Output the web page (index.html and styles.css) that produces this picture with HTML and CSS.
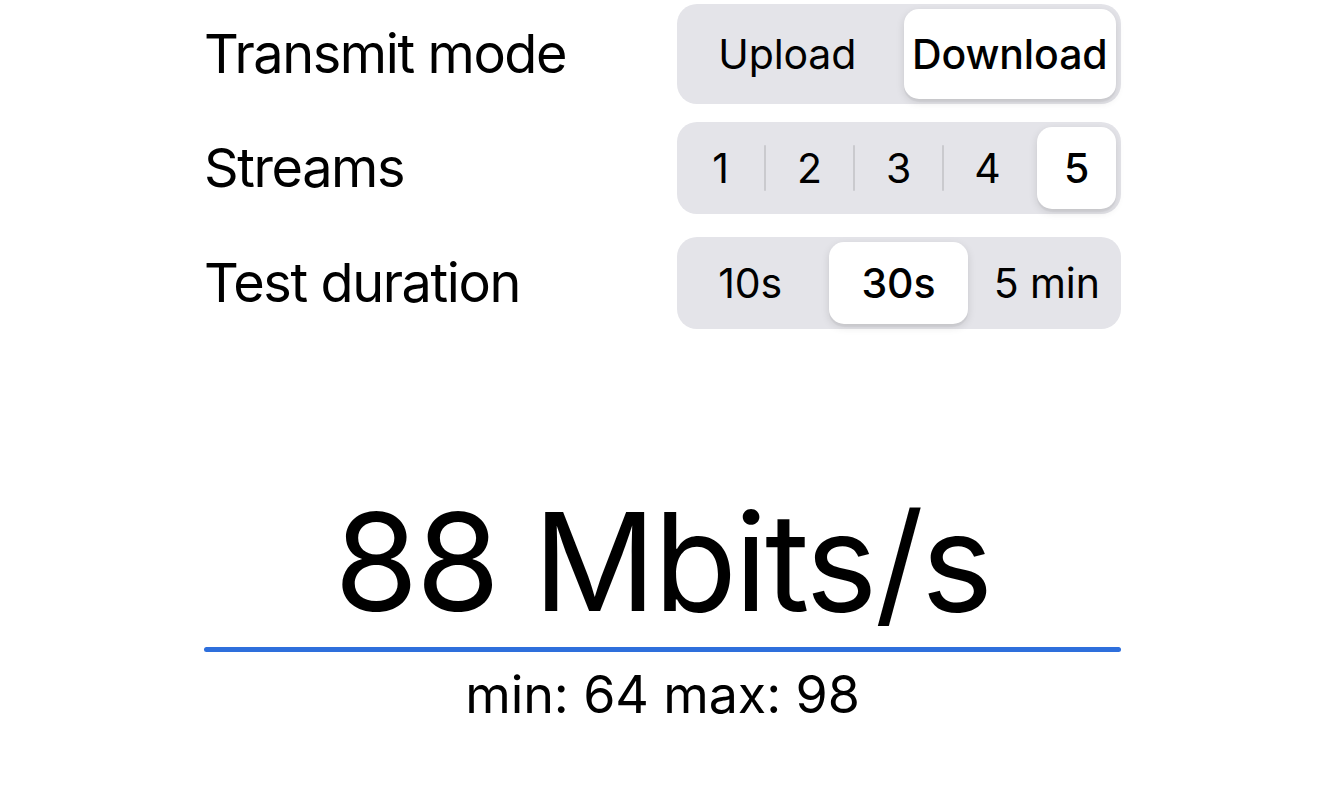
FILE: index.html
```html
<!DOCTYPE html>
<html lang="en">
<head>
    <meta charset="UTF-8">
    <meta name="viewport" content="width=device-width, initial-scale=1.0">
    <title>Speed Test</title>
    <link rel="stylesheet" href="styles.css">
</head>
<body>
    <div class="container">
        <div class="settings">
            <div class="setting tall">
                <div class="label">Transmit mode</div>
                <div class="segmented">
                    <div class="seg"><span class="seg-inner">Upload</span></div>
                    <div class="seg"><span class="seg-inner selected">Download</span></div>
                </div>
            </div>

            <div class="setting row-streams">
                <div class="label">Streams</div>
                <div class="segmented">
                    <div class="seg"><span class="seg-inner">1</span></div>
                    <span class="sep"></span>
                    <div class="seg"><span class="seg-inner">2</span></div>
                    <span class="sep"></span>
                    <div class="seg"><span class="seg-inner">3</span></div>
                    <span class="sep"></span>
                    <div class="seg"><span class="seg-inner">4</span></div>
                    <span class="sep hidden"></span>
                    <div class="seg"><span class="seg-inner selected">5</span></div>
                </div>
            </div>

            <div class="setting row-duration">
                <div class="label">Test duration</div>
                <div class="segmented">
                    <div class="seg"><span class="seg-inner">10s</span></div>
                    <div class="seg"><span class="seg-inner selected">30s</span></div>
                    <div class="seg"><span class="seg-inner">5 min</span></div>
                </div>
            </div>
        </div>

        <div class="result">
            <div class="speed">88 Mbits/s</div>
            <div class="bar"></div>
            <div class="range">min: 64 max: 98</div>
        </div>
    </div>
</body>
</html>
```

FILE: styles.css
```css
* { margin: 0; padding: 0; box-sizing: border-box; }
body { font-family: Inter, "Liberation Sans", sans-serif; background: #fff; color: #000; }
.container { width: 922px; margin: 0 auto; padding-left: 5px; }

.settings { padding-top: 4px; }
.setting { display: flex; align-items: center; height: 92px; }
.setting.tall { height: 100px; }
.row-streams { margin-top: 18px; }
.row-duration { margin-top: 23px; }
.label { width: 473px; font-size: 54px; line-height: 1; letter-spacing: -1.4px; }

.segmented { flex: 1; height: 100%; display: flex; align-items: stretch; background: #e4e4e9; border-radius: 20px; }
.seg { flex: 1 1 0; display: flex; padding: 5px 5px; }
.seg:first-child { padding-left: 4px; }
.seg-inner { flex: 1; display: flex; align-items: center; justify-content: center; font-size: 41px; line-height: 1; border-radius: 15px; letter-spacing: -0.1px; }
.seg-inner.selected { background: #fff; font-weight: 500; box-shadow: 0 3px 8px rgba(0,0,0,0.12), 0 3px 1px rgba(0,0,0,0.04); }
.sep { width: 2px; height: 46px; align-self: center; background: #cacace; border-radius: 1px; margin: 0 -1px; }
.sep.hidden { visibility: hidden; }

.result { margin-top: 165px; text-align: center; }
.speed { font-size: 136px; line-height: 1; letter-spacing: -2.5px; }
.bar { height: 5px; margin-top: 17px; background: #2e6fdc; border-radius: 3px; }
.range { margin-top: 17px; font-size: 52px; line-height: 1; letter-spacing: -0.1px; }
```
